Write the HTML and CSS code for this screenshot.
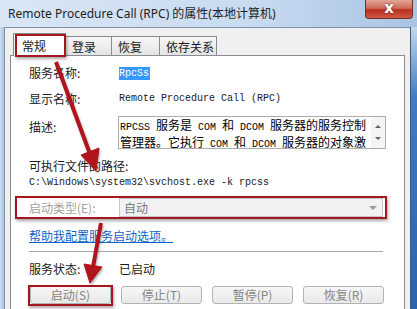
FILE: index.html
```html
<!DOCTYPE html>
<html lang="zh-CN">
<head>
  <meta charset="UTF-8">
  <title>Remote Procedure Call (RPC) 的属性</title>
  <link rel="stylesheet" href="styles.css">
</head>
<body>
<div class="window">
  <div class="titlebar">
    <span class="title">Remote Procedure Call (RPC) 的属性(本地计算机)</span>
    <span class="close">x</span>
  </div>
  <div class="main">
    <div class="edge-left"></div>
    <div class="dialog">
      <div class="tabs">
        <span class="tab active">常规</span>
        <span class="tab t2">登录</span>
        <span class="tab t3">恢复</span>
        <span class="tab t4">依存关系</span>
      </div>
      <div class="panel">
        <div class="row"><span class="label">服务名称:</span><span class="mono sel">RpcSs</span></div>
        <div class="row r2"><span class="label">显示名称:</span><span class="mono">Remote Procedure Call (RPC)</span></div>
        <div class="row r3">
          <span class="label">描述:</span>
          <div class="textbox">
            <div class="lines mono">
              <div>RPCSS <span class="cjk">服务是</span> COM <span class="cjk">和</span> DCOM <span class="cjk">服务器的服务控制</span></div>
              <div><span class="cjk">管理器。它执行</span> COM <span class="cjk">和</span> DCOM <span class="cjk">服务器的对象激</span></div>
            </div>
            <div class="scroll"><span class="up"></span><span class="down"></span></div>
          </div>
        </div>
        <div class="row r4"><span>可执行文件的路径:</span></div>
        <div class="row r5"><span class="mono">C:\Windows\system32\svchost.exe -k rpcss</span></div>
        <div class="row r6 marked">
          <span class="label gray">启动类型(E):</span>
          <div class="combo"><span>自动</span><span class="arrow"></span></div>
        </div>
        <div class="row r7"><a class="link" href="#">帮助我配置服务启动选项。</a></div>
        <div class="sep"></div>
        <div class="row r8"><span class="label">服务状态:</span><span>已启动</span></div>
        <div class="buttons">
          <span class="btn marked-btn">启动(S)</span>
          <span class="btn">停止(T)</span>
          <span class="btn">暂停(P)</span>
          <span class="btn">恢复(R)</span>
        </div>
      </div>
    </div>
    <div class="edge-right"></div>
  </div>

  <svg class="arrows" width="417" height="309" viewBox="0 0 417 309">
    <g fill="#b0141c" stroke="#b0141c">
      <line x1="56" y1="62" x2="90" y2="154" stroke-width="4"/>
      <polygon points="96,171 81,155 99,148" stroke-width="1"/>
      <line x1="101" y1="223" x2="93" y2="267" stroke-width="4"/>
      <polygon points="90,283 84,264 102,267" stroke-width="1"/>
    </g>
  </svg>
</div>
</body>
</html>
```

FILE: styles.css
```css
* { box-sizing: border-box; }
body { margin: 0; width: 417px; height: 309px; overflow: hidden; font-family: "Noto Sans CJK SC", sans-serif; font-size: 12px; color: #1a1a1a; }
.window { position: relative; height: 309px; display: flex; flex-direction: column; background: #c3d8ef; }

.titlebar { height: 27px; display: flex; justify-content: space-between; align-items: flex-start; background: linear-gradient(to right, #d9e6f5, #c8dbf0 60%, #a9c4e4); }
.title { font-family: "Noto Sans", "Noto Sans CJK SC", sans-serif; font-size: 12px; line-height: 14px; padding: 7px 0 0 8px; color: #1e1e1e; }
.close { width: 48px; height: 19px; margin-right: 4px; border: 1px solid #70302a; border-top: 0; border-radius: 0 0 4px 4px; background: linear-gradient(#e2a597, #cf6b58 45%, #b9301f 55%, #cf5a45); color: #fff; font: bold 15px/17px "DejaVu Sans", sans-serif; text-align: center; text-shadow: 0 0 2px #6a1a10; }

.main { flex: 1; display: flex; }
.edge-left { width: 4px; background: linear-gradient(to right, #cfe0f2, #a9c2de); }
.edge-right { width: 7px; background: linear-gradient(#c3d8ef, #3f7cc1 25%, #2a63aa); border-left: 1px solid #3e5a78; }
.dialog { flex: 1; background: #f0f0f0; border-left: 1px solid #7d93ad; border-top: 1px solid #7d93ad; padding-left: 5px; display: flex; flex-direction: column; }

.tabs { height: 27px; display: flex; align-items: flex-end; padding-left: 3px; position: relative; z-index: 1; }
.tab { height: 19px; padding: 3px 0 0 6px; line-height: 14px; border: 1px solid #898c95; border-bottom: 0; border-left: 0; background: linear-gradient(#f7f7f7, #e4e4e4); }
.tab.active { position: relative; width: 53px; height: 23px; margin-bottom: -1px; padding: 5px 0 0 8px; background: #fff; border-left: 1px solid #898c95; }
.tab.active::after { content: ""; position: absolute; left: 1px; top: 0; right: -1px; bottom: -1px; border: 2px solid #a5161e; box-shadow: 1px 2px 3px rgba(0,0,0,.35); }
.t2 { width: 46px; }
.t3 { width: 48px; }
.t4 { width: 57px; }

.panel { flex: 1; width: 395px; background: #fff; border: 1px solid #898c95; border-bottom: 0; padding: 10px 0 0 18px; }
.row { display: flex; align-items: center; height: 14px; line-height: 14px; white-space: nowrap; }
.label { width: 90px; flex: none; }
.mono { font-family: "Liberation Mono", "Noto Sans CJK SC", monospace; font-size: 10px; }
.cjk { font-family: "Noto Sans CJK SC", sans-serif; font-size: 12px; }
.sel { background: #3399ff; color: #fff; padding: 0 1px 0 0; line-height: 13px; }
.r2 { margin-top: 12px; }
.r3 { margin-top: 10px; height: 33px; align-items: flex-start; }
.r3 .label { padding-top: 4px; }
.textbox { margin-left: -1px; width: 268px; height: 33px; border: 1px solid #abadb3; display: flex; }
.lines { flex: 1; padding: 1px 0 0 1px; line-height: 14px; color: #000; }
.scroll { width: 14px; background: #f4f4f4; display: flex; flex-direction: column; justify-content: space-around; align-items: center; padding: 4px 0; }
.up, .down { width: 0; height: 0; border-left: 3px solid transparent; border-right: 3px solid transparent; }
.up { border-bottom: 3px solid #606060; }
.down { border-top: 3px solid #606060; }
.r4 { margin-top: 10px; }
.r5 { margin-top: 3px; }

.marked { margin-top: 6px; margin-left: -14px; width: 372px; height: 23px; padding-left: 12px; border: 2px solid #a5161e; box-shadow: 1px 2px 3px rgba(0,0,0,.35); }
.gray { color: #a3a3a3; }
.combo { width: 264px; height: 19px; border: 1px solid #c2c4c8; background: #f2f2f2; color: #7a7a7a; display: flex; justify-content: space-between; align-items: center; padding: 0 5px 0 4px; }
.arrow { width: 0; height: 0; border-left: 4px solid transparent; border-right: 4px solid transparent; border-top: 4px solid #9a9a9a; }

.r7 { margin-top: 10px; }
.link { color: #0b63c8; text-decoration: underline; }
.sep { margin-top: 8px; width: 354px; height: 1px; background: #a8a8a8; }
.r8 { margin-top: 10px; }

.buttons { margin-top: 10px; padding-left: 1px; display: flex; gap: 10px; }
.btn { width: 81px; height: 18px; line-height: 16px; text-align: center; color: #858585; border: 1px solid #b0b4b8; border-radius: 3px; background: linear-gradient(#f6f6f6, #e9e9e9); }
.marked-btn { position: relative; }
.marked-btn::after { content: ""; position: absolute; inset: -2px -3px -3px -3px; border: 2px solid #a5161e; box-shadow: 1px 2px 3px rgba(0,0,0,.35); }

.arrows { position: absolute; left: 0; top: 0; pointer-events: none; filter: drop-shadow(1px 2px 1px rgba(0,0,0,.3)); }
```
